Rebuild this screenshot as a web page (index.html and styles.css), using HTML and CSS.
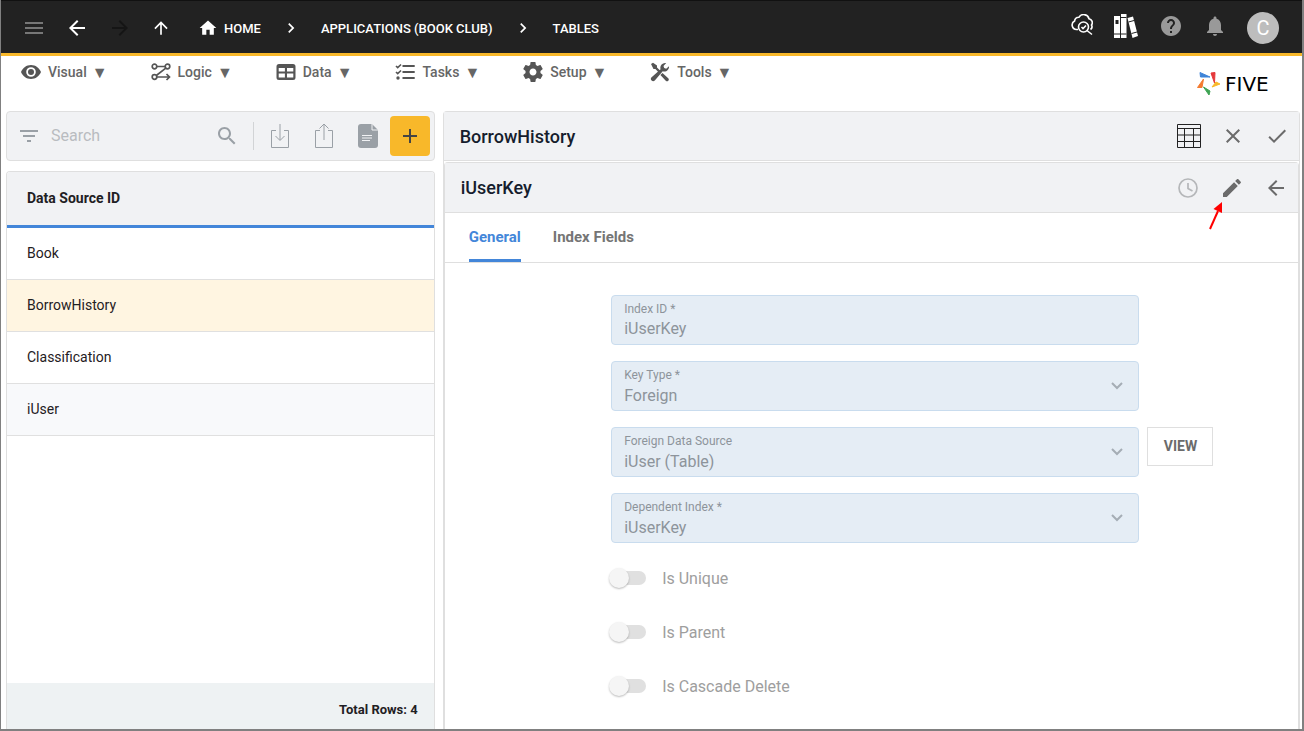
FILE: index.html
```html
<!DOCTYPE html>
<html lang="en">

<head>
    <meta charset="UTF-8">
    <meta name="viewport" content="width=device-width, initial-scale=1.0">
    <title>Five - Tables</title>
    <link rel="stylesheet" href="styles.css">
</head>

<body>
    <header class="topbar">
        <div class="nav-buttons">
            <button class="muted" aria-label="Menu"><svg width="24" height="24" viewBox="0 0 24 24"><path d="M3 18h18v-2H3v2zm0-5h18v-2H3v2zm0-7v2h18V6H3z" /></svg></button>
            <button aria-label="Back"><svg width="24" height="24" viewBox="0 0 24 24"><path d="M20 11H7.83l5.59-5.59L12 4l-8 8 8 8 1.41-1.41L7.83 13H20v-2z" /></svg></button>
            <button class="off" aria-label="Forward" disabled><svg width="24" height="24" viewBox="0 0 24 24"><path d="M12 4l-1.41 1.41L16.17 11H4v2h12.17l-5.58 5.59L12 20l8-8z" /></svg></button>
            <button aria-label="Up"><svg width="20" height="24" viewBox="0 0 24 24"><path d="M4 12l1.41 1.41L11 7.83V20h2V7.83l5.58 5.59L20 12l-8-8-8 8z" /></svg></button>
        </div>
        <nav class="breadcrumbs">
            <a href="#"><svg width="20" height="20" viewBox="0 0 24 24"><path d="M10 20v-6h4v6h5v-8h3L12 3 2 12h3v8z" /></svg>HOME</a>
            <svg width="20" height="20" viewBox="0 0 24 24"><path d="M10 6L8.59 7.41 13.17 12l-4.58 4.59L10 18l6-6z" /></svg>
            <a href="#">APPLICATIONS (BOOK CLUB)</a>
            <svg width="20" height="20" viewBox="0 0 24 24"><path d="M10 6L8.59 7.41 13.17 12l-4.58 4.59L10 18l6-6z" /></svg>
            <a href="#">TABLES</a>
        </nav>
        <div class="tools">
            <button aria-label="Inspect"><svg width="22" height="25" viewBox="0 3 22 25" fill="none" stroke="currentColor" stroke-width="1.600"><path d="M7 18.500H5.500A4.500 4.500 0 0 1 3.600 10 4.300 4.300 0 0 1 8 6.200a5.500 5.500 0 0 1 10 1.500 4 4 0 0 1 2.500 6.300 3.500 3.500 0 0 1-1 4.500" /><circle cx="12.500" cy="16" r="5" /><path d="M10.500 16l1.500 1.500 3-3M16 19.500l5 4" /></svg></button>
            <button aria-label="Library"><svg width="26" height="28" viewBox="0 0 26 28"><path d="M1 4h6v22H1zM8 2h5.500v24H8zM14.500 6l5.500-1.500L25 24l-5.500 2z" /><path d="M2.500 8h3v4h-3z" fill="#222" /><path d="M8 5.500h5.500M8 22h5.500M1 22h6M15.500 10l5.500-1.500M18.500 21.500l5.500-1.500" stroke="#222" /></svg></button>
            <button class="grey" aria-label="Help"><svg width="24" height="24" viewBox="0 0 24 24"><path d="M12 2C6.480 2 2 6.480 2 12s4.480 10 10 10 10-4.480 10-10S17.520 2 12 2zm1 17h-2v-2h2v2zm2.070-7.750l-.9.920C13.450 12.900 13 13.500 13 15h-2v-.5c0-1.100.450-2.100 1.170-2.830l1.240-1.260c.370-.360.590-.860.590-1.410 0-1.100-.9-2-2-2s-2 .9-2 2H8c0-2.210 1.790-4 4-4s4 1.790 4 4c0 .880-.360 1.680-.930 2.250z" /></svg></button>
            <button class="grey" aria-label="Notifications"><svg width="24" height="24" viewBox="0 0 24 24"><path d="M12 22c1.100 0 2-.9 2-2h-4c0 1.100.890 2 2 2zm6-6v-5c0-3.070-1.640-5.640-4.500-6.320V4c0-.830-.670-1.500-1.500-1.500s-1.500.670-1.500 1.500v.680C7.630 5.360 6 7.920 6 11v5l-2 2v1h16v-1l-2-2z" /></svg></button>
            <button class="avatar">C</button>
        </div>
    </header>

    <div class="menubar">
        <nav class="menu">
            <button><svg width="20" height="20" viewBox="0 0 20 20"><path fill-rule="evenodd" d="M10 3C5.500 3 1.700 5.800 0 10c1.700 4.200 5.500 7 10 7s8.300-2.800 10-7c-1.700-4.200-5.500-7-10-7zm0 2.200a4.800 4.800 0 1 1 0 9.600 4.800 4.800 0 0 1 0-9.600z" /><circle cx="10" cy="10" r="3" /></svg>Visual <span>▼</span></button>
            <button><svg width="20" height="20" viewBox="0 0 20 20" fill="none" stroke="currentColor" stroke-width="1.700"><circle cx="3.500" cy="4.500" r="2.300" /><circle cx="16.500" cy="4.500" r="2.300" /><circle cx="3.500" cy="15" r="2.300" /><path d="M6 4.500h8M14.800 6.200L5.300 13.500M6 15h12M15.500 12l3 3-3 3" /></svg>Logic <span>▼</span></button>
            <button><svg width="20" height="20" viewBox="0 0 20 20"><path fill-rule="evenodd" d="M3 2h14a2.500 2.500 0 0 1 2.500 2.500v11A2.500 2.500 0 0 1 17 18H3a2.500 2.500 0 0 1-2.500-2.500v-11A2.500 2.500 0 0 1 3 2zM2.700 6v3.500h6.200V6zM11 6v3.500h6.300V6zM2.700 11.500v4h6.200v-4zM11 11.500v4h6.300v-4z" /></svg>Data <span>▼</span></button>
            <button><svg width="20" height="20" viewBox="0 0 20 20"><path d="M7.500 3h12.200v2H7.500zM7.500 9h12.200v2H7.500zM7.500 15h12.200v2H7.500z" /><circle cx="3" cy="16" r="1.700" /><path d="M1 4l1.700 1.600L6 2.500M1 10l1.700 1.600L6 8.500" fill="none" stroke="currentColor" stroke-width="1.600" /></svg>Tasks <span>▼</span></button>
            <button><svg width="20" height="20" viewBox="2 2 20 20"><path d="M19.430 12.980c.040-.320.070-.640.070-.980s-.030-.660-.070-.980l2.110-1.650c.190-.150.240-.420.120-.640l-2-3.460c-.120-.220-.390-.3-.610-.220l-2.490 1c-.520-.4-1.080-.730-1.690-.980l-.380-2.650C14.460 2.180 14.250 2 14 2h-4c-.250 0-.460.180-.490.420l-.380 2.650c-.610.250-1.170.590-1.690.980l-2.490-1c-.230-.090-.490 0-.610.220l-2 3.460c-.130.220-.070.490.120.640l2.110 1.650c-.040.320-.070.650-.070.980s.030.660.070.980l-2.110 1.650c-.190.150-.240.420-.120.640l2 3.460c.120.220.390.3.610.220l2.490-1c.520.4 1.080.730 1.690.980l.380 2.650c.030.240.240.420.490.420h4c.250 0 .460-.180.490-.420l.380-2.650c.610-.250 1.170-.590 1.690-.980l2.490 1c.230.090.490 0 .610-.220l2-3.460c.120-.220.070-.490-.120-.640l-2.110-1.650zM12 15.500c-1.930 0-3.500-1.570-3.500-3.500s1.570-3.500 3.500-3.500 3.500 1.570 3.500 3.500-1.570 3.500-3.500 3.500z" /></svg>Setup <span>▼</span></button>
            <button><svg width="20" height="20" viewBox="0 0 20 20"><path d="M1 2l2-1.200 4 2.800v2l3.300 3.200-1.600 1.600L5.400 7.100H3.500zM12.500 11l6 5.500a1.800 1.800 0 0 1-2.500 2.500l-5.600-5.900z" /><path d="M19 4.200a4.700 4.700 0 0 1-6.300 5L4.800 18.500a2.200 2.200 0 0 1-3.200-3.200l9-8a4.800 4.800 0 0 1 5.600-6.200l-2.700 2.900.7 2 2 .7z" /></svg>Tools <span>▼</span></button>
        </nav>
        <a class="logo" href="#" aria-label="Five">
            <svg width="24" height="26" viewBox="0 0 24 26">
                <path d="M3 1.500l.5 4.500 9.500 0z" fill="#3f84d8" stroke="#3f84d8" />
                <path d="M14 2L18 1.500 17.500 12z" fill="#e5383b" stroke="#e5383b" />
                <path d="M15 16l8-3-4-2z" fill="#f8b82a" stroke="#f8b82a" />
                <path d="M6.500 16l6.500 4-1 4z" fill="#3fa454" stroke="#3fa454" />
                <path d="M6.500 8L5 16.500H.5z" fill="#f47b30" stroke="#f47b30" />
            </svg>
            <span>FIVE</span>
        </a>
    </div>

    <main>
        <section class="left">
            <div class="searchbar">
                <svg width="24" height="24" viewBox="0 0 24 24"><path d="M10 18h4v-2h-4v2zM3 6v2h18V6H3zm3 7h12v-2H6v2z" /></svg>
                <input type="text" placeholder="Search" aria-label="Search">
                <button aria-label="Search"><svg width="24" height="24" viewBox="0 0 24 24"><path d="M15.500 14h-.790l-.280-.270C15.410 12.590 16 11.110 16 9.500 16 5.910 13.090 3 9.500 3S3 5.910 3 9.500 5.910 16 9.500 16c1.610 0 3.090-.590 4.230-1.570l.270.280v.790l5 4.990L20.490 19l-4.990-5zm-6 0C7.010 14 5 11.990 5 9.500S7.010 5 9.500 5 14 7.010 14 9.500 11.990 14 9.500 14z" /></svg></button>
                <div class="divider"></div>
                <button aria-label="Import"><svg width="20" height="26" viewBox="0 0 20 26" fill="none" stroke="currentColor"><path d="M6 7.500H1.500v17h17v-17H14M10 1v16M5.500 13l4.500 4.500 4.500-4.500" /></svg></button>
                <button aria-label="Export"><svg width="20" height="26" viewBox="0 0 20 26" fill="none" stroke="currentColor"><path d="M6 7.500H1.500v17h17v-17H14M10 17V1M5.500 5.500L10 1l4.500 4.500" /></svg></button>
                <button aria-label="Document"><svg width="20" height="24" viewBox="0 0 20 24"><path d="M3 0h11l6 6v15a3 3 0 0 1-3 3H3a3 3 0 0 1-3-3V3a3 3 0 0 1 3-3z" /><path d="M14 0v6h6M4 11.500h10M4 14h10M4 16.500h8" fill="none" stroke="#f1f2f4" /></svg></button>
                <button class="add" aria-label="Add"><svg width="24" height="24" viewBox="0 0 24 24"><path d="M19 13h-6v6h-2v-6H5v-2h6V5h2v6h6v2z" /></svg></button>
            </div>

            <div class="list">
                <table>
                    <thead>
                        <tr>
                            <th>Data Source ID</th>
                        </tr>
                    </thead>
                    <tbody>
                        <tr>
                            <td>Book</td>
                        </tr>
                        <tr class="selected">
                            <td>BorrowHistory</td>
                        </tr>
                        <tr>
                            <td>Classification</td>
                        </tr>
                        <tr class="alt">
                            <td>iUser</td>
                        </tr>
                    </tbody>
                </table>
                <div class="total">Total Rows: 4</div>
            </div>
        </section>

        <section class="right">
            <div class="title-row">
                <h1>BorrowHistory</h1>
                <button class="dark" aria-label="Grid"><svg width="24" height="24" viewBox="0 0 24 24" fill="none" stroke="currentColor"><path d="M.5.500h23v23H.5zM.5 4.500h23M.5 11h23M.5 17.500h23M7.500 4.500v19M16.500 4.500v19" /></svg></button>
                <button aria-label="Close"><svg width="24" height="24" viewBox="0 0 24 24"><path d="M19 6.410L17.590 5 12 10.590 6.410 5 5 6.410 10.590 12 5 17.590 6.410 19 12 13.410 17.590 19 19 17.590 13.410 12z" /></svg></button>
                <button aria-label="Save"><svg width="24" height="24" viewBox="0 0 24 24"><path d="M9 16.170L4.830 12l-1.420 1.410L9 19 21 7l-1.410-1.410z" /></svg></button>
            </div>

            <div class="panel">
                <div class="title-row">
                    <h2>iUserKey</h2>
                    <button class="faded" aria-label="History"><svg width="24" height="24" viewBox="0 0 24 24" fill="none" stroke="currentColor" stroke-width="1.700"><circle cx="12" cy="12" r="9" /><path d="M12 7v5.500l4.500 2.500" /></svg></button>
                    <button class="edit" aria-label="Edit">
                        <svg width="24" height="24" viewBox="0 0 24 24"><path d="M3 17.250V21h3.750L17.810 9.940l-3.750-3.750L3 17.250zM20.710 7.040c.390-.390.390-1.020 0-1.410l-2.340-2.340c-.390-.390-1.020-.390-1.410 0l-1.830 1.830 3.750 3.750 1.830-1.830z" /></svg>
                        <svg class="pointer" width="16" height="30" viewBox="0 0 16 30"><path d="M2 28L10 10" stroke="#f00" stroke-width="2" /><path d="M14 1v11L5.500 8z" fill="#f00" /></svg>
                    </button>
                    <button aria-label="Back"><svg width="24" height="24" viewBox="0 0 24 24"><path d="M20 11H7.830l5.590-5.590L12 4l-8 8 8 8 1.410-1.410L7.830 13H20v-2z" /></svg></button>
                </div>

                <div class="tabs">
                    <button class="active">General</button>
                    <button>Index Fields</button>
                </div>

                <form>
                    <div class="field">
                        <label for="index-id">Index ID *</label>
                        <input type="text" id="index-id" value="iUserKey" disabled>
                    </div>
                    <div class="field">
                        <label for="key-type">Key Type *</label>
                        <select id="key-type" disabled>
                            <option>Foreign</option>
                        </select>
                        <svg width="24" height="24" viewBox="0 0 24 24"><path d="M7 10l5 5 5-5" /></svg>
                    </div>
                    <div class="field">
                        <label for="data-source">Foreign Data Source</label>
                        <select id="data-source" disabled>
                            <option>iUser (Table)</option>
                        </select>
                        <svg width="24" height="24" viewBox="0 0 24 24"><path d="M7 10l5 5 5-5" /></svg>
                    </div>
                    <button type="button" class="view">VIEW</button>
                    <div class="field">
                        <label for="dependent-index">Dependent Index *</label>
                        <select id="dependent-index" disabled>
                            <option>iUserKey</option>
                        </select>
                        <svg width="24" height="24" viewBox="0 0 24 24"><path d="M7 10l5 5 5-5" /></svg>
                    </div>
                    <label class="switch"><input type="checkbox" disabled>Is Unique</label>
                    <label class="switch"><input type="checkbox" disabled>Is Parent</label>
                    <label class="switch"><input type="checkbox" disabled>Is Cascade Delete</label>
                </form>
            </div>
        </section>
    </main>
</body>

</html>
```

FILE: styles.css
```css
* {
    box-sizing: border-box;
}

body {
    margin: 0;
    min-height: 100vh;
    display: flex;
    flex-direction: column;
    border: solid #808080;
    border-width: 0 2px 2px 1px;
    background: white;
    color: #1f2023;
    font-family: Roboto, "Liberation Sans", sans-serif;
    font-size: 14px;
}

button {
    padding: 0;
    border: none;
    background: none;
    color: inherit;
    font: inherit;
}

svg {
    display: block;
    flex: none;
    fill: currentColor;
}

svg[fill="none"] {
    fill: none;
}

/* top bar */
.topbar {
    display: flex;
    align-items: center;
    height: 56px;
    padding: 2px 23px 0 21px;
    border-top: 1px solid #111;
    border-bottom: 3px solid #f8b82a;
    background: #222;
    color: white;
}

.nav-buttons {
    display: flex;
    gap: 19px;
    margin-right: 27px;
}

.muted {
    color: #777;
}

.off {
    color: #151515;
}

.breadcrumbs {
    display: flex;
    align-items: center;
    gap: 20px;
    font-size: 13px;
    font-weight: 500;
}

.breadcrumbs a {
    display: flex;
    align-items: center;
    gap: 6px;
    color: white;
    text-decoration: none;
}

.tools {
    display: flex;
    align-items: center;
    gap: 20px;
    margin-left: auto;
}

.tools svg {
    margin-bottom: 4px;
}

.grey {
    color: #999;
}

.avatar {
    width: 32px;
    height: 32px;
    border-radius: 50%;
    background: #bdbdbd;
    font-size: 20px;
}

/* menu */
.menubar {
    display: flex;
    justify-content: space-between;
    height: 55px;
    padding: 0 19px 0 20px;
}

.menu {
    display: flex;
    align-items: flex-start;
    gap: 43px;
    padding-top: 6px;
    color: #666;
    font-weight: 500;
}

.menu button {
    display: flex;
    align-items: center;
    gap: 7px;
    height: 20px;
}

.menu svg {
    color: #555;
}

.menu span {
    margin-left: -2px;
    font-size: 16px;
}

.logo {
    display: flex;
    align-items: center;
    gap: 4px;
    color: black;
    font-family: "DejaVu Sans", sans-serif;
    font-size: 20px;
    text-decoration: none;
}

.logo span {
    width: 58px;
}

/* columns */
main {
    flex: 1;
    display: grid;
    grid-template-columns: 1fr 2fr;
    gap: 8px;
    padding: 0 2px 0 5px;
}

.left,
.right,
.list,
.panel {
    display: flex;
    flex-direction: column;
    min-width: 0;
}

.searchbar {
    display: flex;
    align-items: center;
    height: 50px;
    margin-bottom: 10px;
    padding: 0 4px 0 10px;
    border: 1px solid #dfdfdf;
    border-radius: 4px;
    background: #f1f2f4;
    color: #9aa0a6;
}

.searchbar input {
    flex: 1;
    min-width: 0;
    padding: 0 10px 2px;
    border: none;
    outline: none;
    background: none;
    font: inherit;
    font-size: 16px;
}

.searchbar input::placeholder {
    color: #b9bcc0;
}

.divider {
    width: 1px;
    height: 28px;
    margin: 0 16px 0 14px;
    background: #d2d4d6;
}

.searchbar .divider ~ button {
    margin-right: 24px;
}

.searchbar .divider ~ button:nth-last-child(2) {
    margin-right: 12px;
}

.searchbar .add.add {
    display: grid;
    place-items: center;
    width: 40px;
    height: 40px;
    margin: 0;
    border-radius: 4px;
    background: #f8b82a;
    color: #444;
}

.list {
    flex: 1;
    border: 1px solid #dfdfdf;
    border-bottom: none;
    border-radius: 4px 4px 0 0;
    overflow: hidden;
}

table {
    width: 100%;
    border-spacing: 0;
}

th {
    height: 56px;
    padding: 0 20px 2px;
    border-bottom: 3px solid #4386d9;
    background: #f1f2f4;
    font-weight: 700;
    text-align: left;
}

td {
    height: 52px;
    padding: 0 20px 2px;
    border-bottom: 1px solid #e0e0e0;
}

.selected {
    background: #fff5e1;
}

.alt {
    background: #f8f9fb;
}

.total {
    height: 46px;
    margin-top: auto;
    padding: 0 16px 0 20px;
    background: #eef2f3;
    font-size: 13px;
    font-weight: 700;
    line-height: 54px;
    text-align: right;
}

/* detail */
.right {
    border: 1px solid #dfdfdf;
    border-bottom: none;
    border-radius: 4px 4px 0 0;
}

.title-row {
    display: flex;
    align-items: center;
    gap: 20px;
    height: 49px;
    padding: 0 10px 0 16px;
    border-bottom: 1px solid #dfdfdf;
    background: #f1f2f4;
    color: #6b6b6b;
}

.title-row h1,
.title-row h2 {
    flex: 1;
    margin: 0;
    color: #161d2d;
    font-size: 18px;
    font-weight: 500;
}

.title-row .dark {
    color: #222;
}

.title-row .faded {
    color: #b5b7b9;
}

.panel {
    flex: 1;
    margin-top: 1px;
    border: 1px solid #dfdfdf;
    border-bottom: none;
    border-radius: 4px 4px 0 0;
}

.panel .title-row {
    height: 50px;
}

.edit {
    position: relative;
}

.pointer {
    position: absolute;
    top: 25px;
    left: -12px;
}

.tabs {
    display: flex;
    gap: 32px;
    height: 50px;
    padding: 0 24px;
    border-bottom: 1px solid #dfdfdf;
}

.tabs button {
    border: solid transparent;
    border-width: 1px 0 3px;
    color: #757575;
    font-size: 15px;
    font-weight: 700;
}

.tabs .active {
    border-bottom-color: #4386d9;
    color: #4386d9;
}

form {
    display: grid;
    grid-template-columns: 1fr 62.5% 1fr;
    row-gap: 16px;
    padding: 32px 0 0 8px;
}

.field,
.switch {
    grid-column: 2;
}

.field {
    position: relative;
    height: 50px;
    padding: 6px 12px;
    border: 1px solid #c9dcee;
    border-radius: 4px;
    background: #e5edf5;
    color: #8d949b;
}

.field label {
    display: block;
    font-size: 12px;
    line-height: 14px;
}

.field input,
.field select {
    display: block;
    width: 100%;
    height: 24px;
    padding: 0;
    border: none;
    background: none;
    color: inherit;
    font: inherit;
    font-size: 16px;
    opacity: 1;
    appearance: none;
}

.field select {
    height: 26px;
}

.field svg {
    position: absolute;
    top: 11px;
    right: 9px;
    fill: none;
    stroke: #a5adb5;
    stroke-width: 2px;
}

.view {
    grid-column: 3;
    justify-self: start;
    width: 66px;
    height: 39px;
    margin-left: 8px;
    padding-bottom: 2px;
    border: 1px solid #dfdfdf;
    color: #6b6b6b;
    font-weight: 700;
}

.switch {
    display: flex;
    align-items: center;
    gap: 16px;
    height: 38px;
    color: #9e9e9e;
    font-size: 16px;
}

.switch input {
    position: relative;
    width: 35px;
    height: 14px;
    margin: 0;
    border-radius: 7px;
    background: #e0e0e0;
    appearance: none;
}

.switch input::before {
    content: "";
    position: absolute;
    top: -3px;
    left: -2px;
    width: 20px;
    height: 20px;
    border-radius: 50%;
    background: #f5f5f5;
    box-shadow: 0 1px 2px #0004;
}
```
